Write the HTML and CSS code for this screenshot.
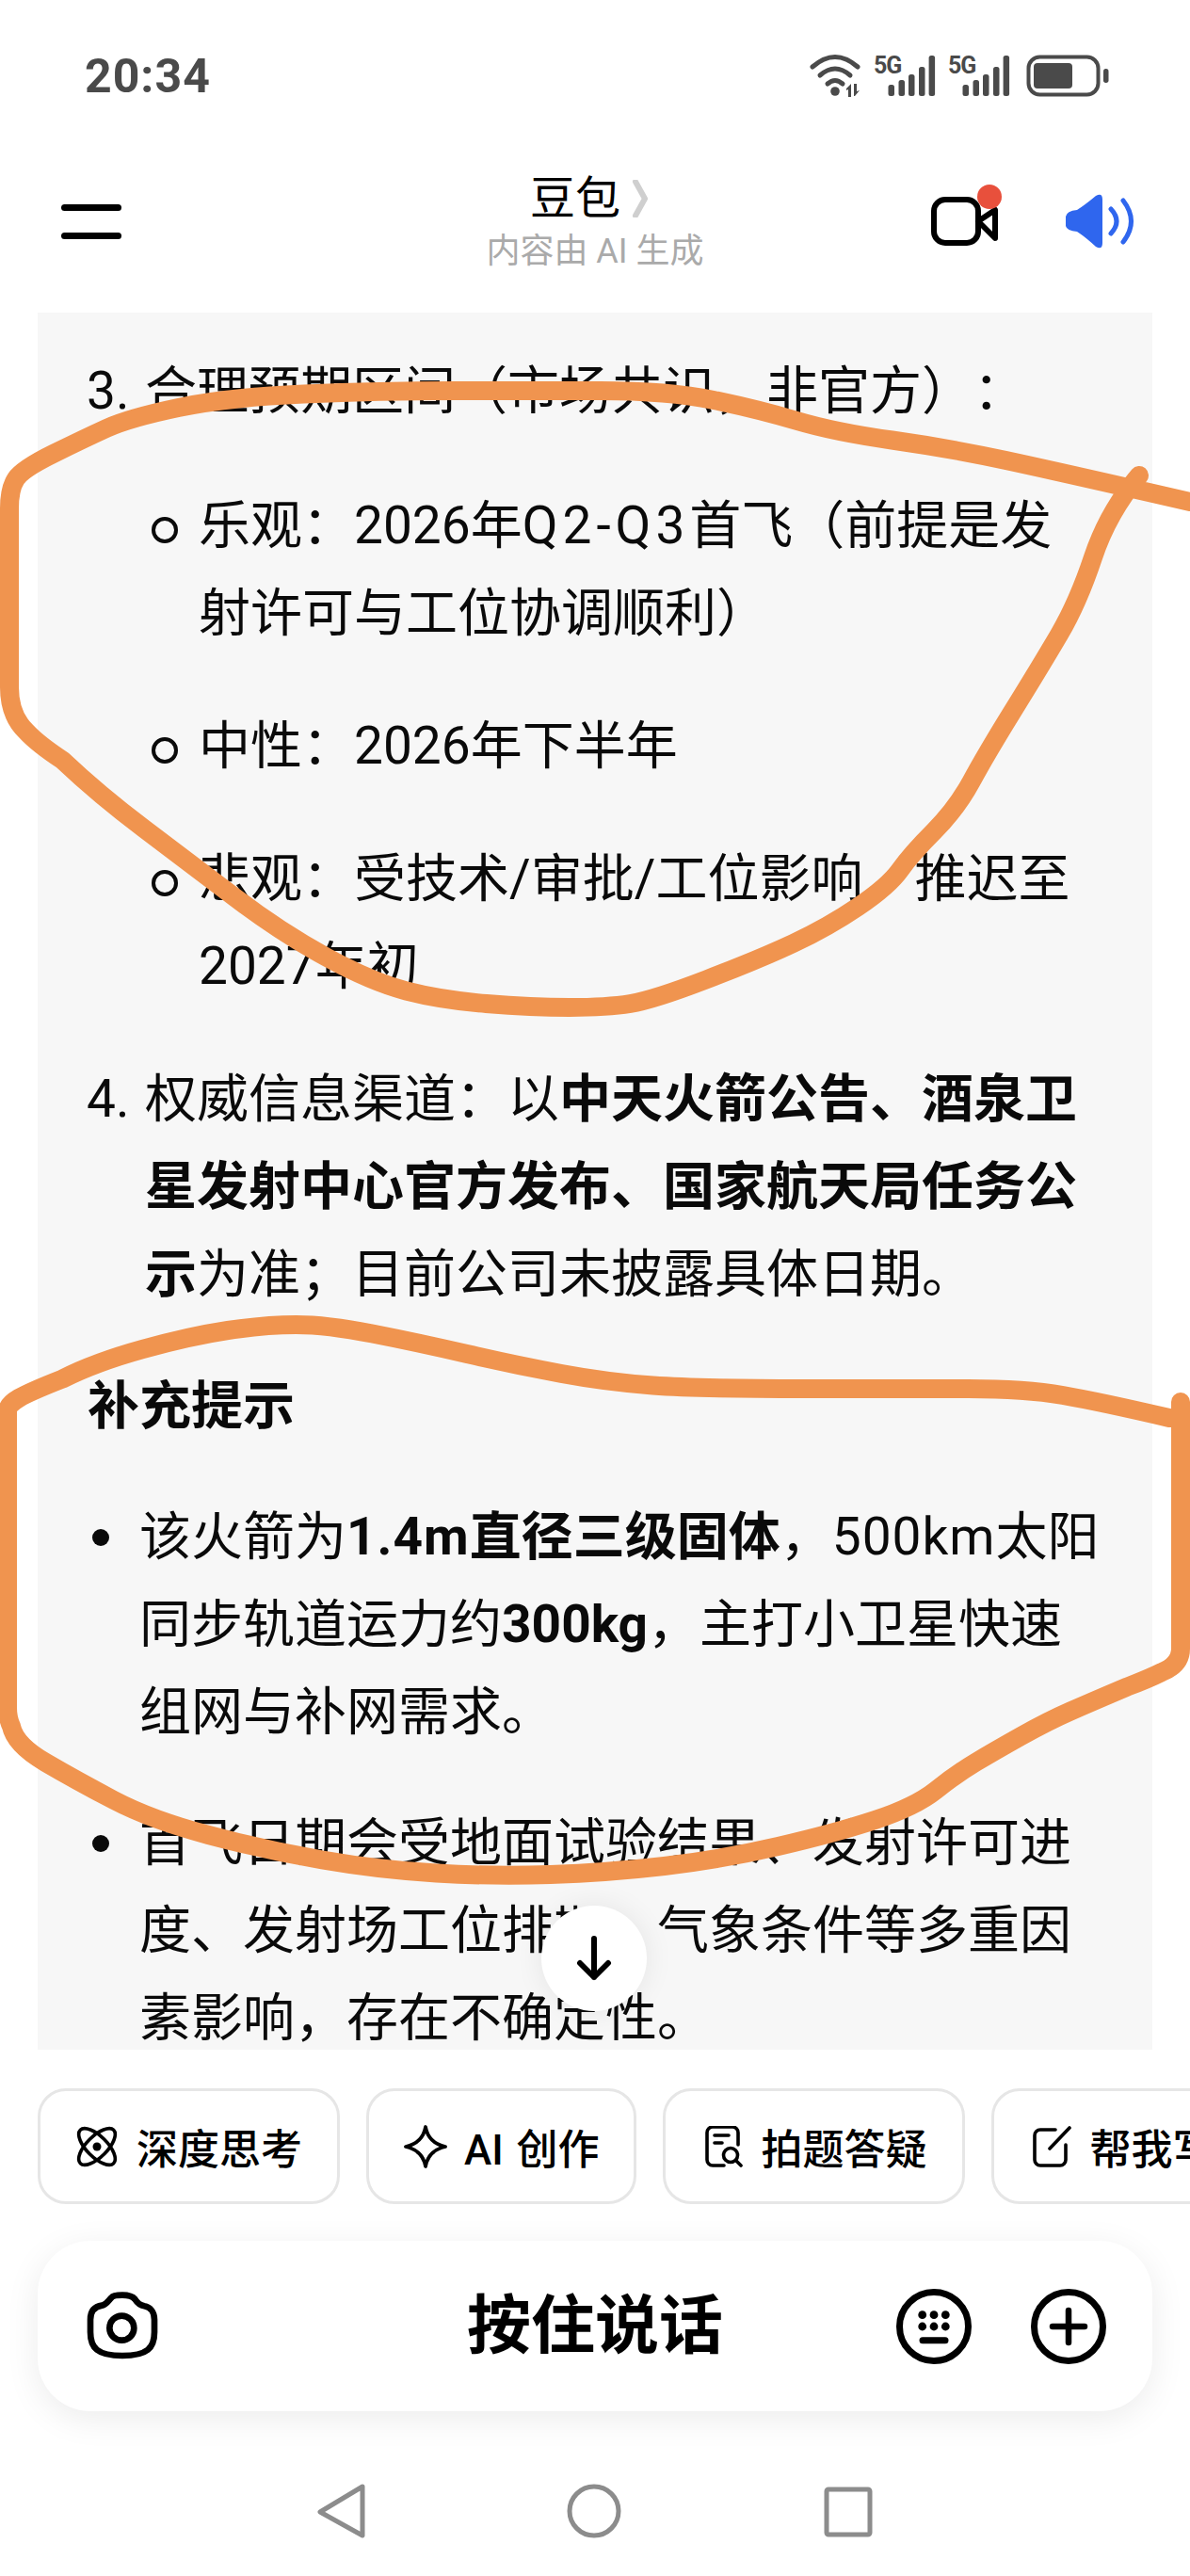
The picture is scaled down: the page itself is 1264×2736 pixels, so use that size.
FILE: index.html
```html
<!DOCTYPE html>
<html lang="zh-CN">
<head>
<meta charset="utf-8">
<title>豆包</title>
<link rel="stylesheet" href="styles.css">
</head>
<body>
<div class="screen">
  <header class="statusbar">
    <span class="time">20:34</span>
    <svg class="status-icons" viewBox="858 56 320 48" width="320" height="48">
      <g fill="none" stroke="#4a4a4a" stroke-linecap="round" stroke-width="5">
        <path d="M863 71Q887 50 911 71"/>
        <path d="M871 80Q887 66 903 80"/>
        <path d="M879 89Q887 82 895 89"/>
      </g>
      <g fill="#4a4a4a">
        <circle cx="887" cy="97" r="4.8"/>
        <path d="M899 94l5-5v14h-3v-8l-2 1zM907 89h3v8l3-1-5 6h-1z"/>
        <text class="net" x="928" y="78">5G</text>
        <rect x="943.5" y="90" width="6.5" height="12" rx="2.5"/>
        <rect x="954.5" y="85" width="6.5" height="17" rx="2.5"/>
        <rect x="965" y="79" width="6.5" height="23" rx="2.5"/>
        <rect x="976" y="71" width="6.5" height="31" rx="2.5"/>
        <rect x="986.6" y="59" width="6.5" height="43" rx="2.5"/>
        <text class="net" x="1007" y="78">5G</text>
        <rect x="1022.5" y="90" width="6.5" height="12" rx="2.5"/>
        <rect x="1033.5" y="85" width="6.5" height="17" rx="2.5"/>
        <rect x="1044" y="79" width="6.5" height="23" rx="2.5"/>
        <rect x="1055" y="71" width="6.5" height="31" rx="2.5"/>
        <rect x="1065.6" y="59" width="6.5" height="43" rx="2.5"/>
        <rect x="1098" y="67" width="41" height="27" rx="4"/>
        <rect x="1172" y="73" width="5.5" height="15" rx="2.7"/>
      </g>
      <rect x="1092.5" y="60.5" width="74" height="40" rx="12" fill="none" stroke="#4a4a4a" stroke-width="4"/>
    </svg>
  </header>

  <nav class="navbar">
    <div class="menu"><i></i><i></i></div>
    <div class="title">
      <div class="title-row">
        <span class="title-name">豆包</span>
        <svg class="chevron" viewBox="0 0 18 40" width="18" height="40"><path d="M4 2Q14 20 14 20Q14 20 4 38" fill="none" stroke="#cfcfcf" stroke-width="6" stroke-linecap="round" stroke-linejoin="round"/></svg>
      </div>
      <div class="title-sub">内容由 AI 生成</div>
    </div>
    <div class="actions">
      <svg viewBox="985 192 80 76" width="80" height="76">
        <rect x="992" y="212" width="47" height="46" rx="12" fill="none" stroke="#000" stroke-width="6"/>
        <path d="M1039 235L1057 223V253Z" fill="none" stroke="#000" stroke-width="6" stroke-linejoin="round"/>
        <circle cx="1051" cy="209" r="13" fill="#e8503c"/>
      </svg>
      <svg viewBox="1128 202 80 66" width="80" height="66">
        <path d="M1132 230Q1133 224 1144 223Q1152 218 1164 208Q1171 204 1171 212V258Q1171 266 1164 262Q1152 251 1144 246Q1133 245 1132 240Z" fill="#2f66ee"/>
        <path d="M1180 222Q1192 235 1180 248M1193 213Q1210 235 1193 257" fill="none" stroke="#2f66ee" stroke-width="5" stroke-linecap="round"/>
      </svg>
    </div>
  </nav>

  <main class="content">
    <ol class="steps" start="3">
      <li>合理预期区间（市场共识，非官方）：
        <ul class="sub">
          <li>乐观：2026年<span class="sp5">Q2-Q3</span>首飞（前提是发射许可与工位协调顺利）</li>
          <li>中性：2026年下半年</li>
          <li>悲观：受技术/审批/工位影响，推迟至2027年初</li>
        </ul>
      </li>
      <li>权威信息渠道：以<strong>中天火箭公告、酒泉卫星发射中心官方发布、国家航天局任务公示</strong>为准；目前公司未披露具体日期。</li>
    </ol>
    <p class="heading"><strong>补充提示</strong></p>
    <ul class="notes">
      <li>该火箭为<strong><span class="sp1">1.4m</span>直径三级固体</strong>，<span class="sp1">500km</span>太阳同步轨道运力约<strong>300kg</strong>，主打小卫星快速组网与补网需求。</li>
      <li>首飞日期会受地面试验结果、发射许可进度、发射场工位排期、气象条件等多重因素影响，存在不确定性。</li>
    </ul>
    <button class="scroll-down" type="button" aria-label="向下">
      <svg viewBox="0 0 40 48" width="40" height="48"><path d="M20 3V44M5 29L20 44L35 29" fill="none" stroke="#000" stroke-width="6" stroke-linecap="round" stroke-linejoin="round"/></svg>
    </button>
  </main>

  <div class="chips">
    <div class="chip">
      <svg viewBox="0 0 44 44" width="44" height="44" fill="none" stroke="#000" stroke-width="3.6"><ellipse cx="22" cy="22" rx="25" ry="11" transform="rotate(45 22 22)"/><ellipse cx="22" cy="22" rx="25" ry="11" transform="rotate(-45 22 22)"/><circle cx="22" cy="22" r="4.5" fill="#000" stroke="none"/></svg>
      <span>深度思考</span>
    </div>
    <div class="chip chip-ai">
      <svg viewBox="0 0 48 48" width="48" height="48" fill="none" stroke="#000" stroke-width="3.8" stroke-linejoin="round"><path d="M24 3Q27 20 45 24Q27 28 24 45Q21 28 3 24Q21 20 24 3Z"/></svg>
      <span>AI 创作</span>
    </div>
    <div class="chip chip-scan">
      <svg viewBox="0 0 40 44" width="40" height="44" fill="none" stroke="#000" stroke-width="3.6" stroke-linecap="round"><path d="M35 20V7a6 6 0 0 0-6-6H8a6 6 0 0 0-6 6V36a6 6 0 0 0 6 6H20"/><path d="M10 10H25M10 18H18"/><circle cx="27" cy="31" r="7.5"/><path d="M33 37L38 42"/></svg>
      <span>拍题答疑</span>
    </div>
    <div class="chip chip-write">
      <svg viewBox="0 0 44 44" width="44" height="44" fill="none" stroke="#000" stroke-width="3.6" stroke-linecap="round"><path d="M25 4H9a6 6 0 0 0-6 6V36a6 6 0 0 0 6 6H30a6 6 0 0 0 6-6V20"/><path d="M19 24L40 2"/></svg>
      <span>帮我写作</span>
    </div>
  </div>

  <section class="inputbar">
    <div class="input-left">
      <svg viewBox="60 35 240 230" width="80" height="76.67" fill="none" stroke="#000" stroke-width="20"><path d="M78 130C78 100 95 88 115 85C130 82 135 70 145 60C150 53 165 52 180 52C195 52 210 53 220 65C228 78 235 84 250 87C268 90 282 105 282 130V170C282 220 260 245 180 245C100 245 78 220 78 170Z"/><circle cx="178" cy="157" r="39"/></svg>
    </div>
    <div class="input-label">按住说话</div>
    <div class="input-right">
      <svg viewBox="0 0 80 80" width="80" height="80"><circle cx="40" cy="40" r="36.5" fill="none" stroke="#000" stroke-width="7"/><g fill="#000"><circle cx="27.7" cy="27.7" r="4.4"/><circle cx="40" cy="27.7" r="4.4"/><circle cx="52.3" cy="27.7" r="4.4"/><circle cx="27.7" cy="40" r="4.4"/><circle cx="40" cy="40" r="4.4"/><circle cx="52.3" cy="40" r="4.4"/></g><path d="M28 54.7H52" stroke="#000" stroke-width="7" stroke-linecap="round"/></svg>
      <svg viewBox="0 0 80 80" width="80" height="80"><circle cx="40" cy="40" r="36.5" fill="none" stroke="#000" stroke-width="7"/><path d="M23 40H57M40 23V57" stroke="#000" stroke-width="6.5" stroke-linecap="round"/></svg>
    </div>
  </section>

  <footer class="sysnav">
    <svg viewBox="0 0 52 58" width="52" height="58"><path d="M49 3L4 30L49 55Z" fill="none" stroke="#8c8c8c" stroke-width="5" stroke-linejoin="round"/></svg>
    <svg viewBox="0 0 60 58" width="60" height="58"><circle cx="30" cy="29" r="26" fill="none" stroke="#8c8c8c" stroke-width="5"/></svg>
    <svg viewBox="0 0 54 58" width="54" height="58"><rect x="4" y="6" width="46" height="48" rx="2" fill="none" stroke="#8c8c8c" stroke-width="5"/></svg>
  </footer>

  <svg class="scribble" viewBox="0 0 1264 2736" width="1264" height="2736">
    <path d="M1264 533Q1129 502 1068.5 489Q1008 476 947.5 467.5Q887 459 846.5 447Q806 435 758 425Q710 415 637.5 415Q565 415 484 415Q403 415 322.5 418.5Q242 422 189.5 433Q137 444 113 455Q89 466 56.5 482Q24 498 17 508.5Q10 519 10 540L10 730Q10 760 28 777Q40 790 66.5 807.5Q105 844 153.5 880.5Q202 917 250 953.5Q298 990 346.5 1016.5Q395 1043 431.5 1052.5Q468 1062 516.5 1066Q565 1070 605 1070Q645 1070 669.5 1066Q694 1062 750 1040.5Q806 1019 842.5 1002Q879 985 911.5 963Q944 941 956 924Q968 907 992 883Q1016 859 1032 829.5Q1048 800 1076.5 754Q1105 708 1125 674Q1145 640 1161 592Q1177 544 1210 505"/>
    <path d="M1254 1489L1254 1751Q1254 1768 1234 1776Q1220 1783 1197.5 1791.5Q1161 1807 1137 1817.5Q1113 1828 1084.5 1844Q1056 1860 1036 1872Q1016 1884 994 1901.5Q972 1919 929.5 1933Q887 1947 826.5 1961Q766 1975 705.5 1982Q645 1989 584.5 1991Q524 1993 463.5 1989.5Q403 1986 342.5 1975.5Q282 1965 221.5 1949Q161 1933 121 1912Q81 1891 48.5 1872Q16 1853 12 1833.5Q8 1825 8 1814L8 1499Q8 1492 20 1485Q32 1478 66.5 1464.5Q101 1447 151.5 1433Q202 1419 242 1413Q282 1407 314.5 1407Q347 1407 395.5 1416.5Q444 1426 496 1438Q548 1450 596.5 1459Q645 1468 693.5 1471.5Q742 1475 855 1475Q968 1475 1028.5 1475Q1089 1475 1129 1482Q1169 1489 1242 1506"/>
  </svg>
</div>
</body>
</html>
```

FILE: styles.css
```css
* { box-sizing: border-box; }
html, body { margin: 0; padding: 0; background: #fff; }
body { font-family: Roboto, "Noto Sans CJK SC", sans-serif; color: #0a0a0a; text-spacing-trim: space-all; }

.screen { position: relative; width: 1264px; height: 2736px; overflow: hidden; display: flex; flex-direction: column; background: #fff; }

.statusbar { height: 150px; flex: none; display: flex; justify-content: space-between; align-items: flex-start; padding: 56px 86px 0 90px; }
.time { font-size: 50px; line-height: 50px; font-weight: 700; color: #4a4a4a; letter-spacing: 1px; }
.net { font-family: Roboto, sans-serif; font-size: 25px; font-weight: 700; letter-spacing: -1px; }

.navbar { height: 182px; flex: none; display: grid; grid-template-columns: 1fr auto 1fr; align-items: start; padding: 0 56px; }
.menu { display: flex; flex-direction: column; gap: 23px; width: 64px; margin: 67px 0 0 9px; }
.menu i { display: block; width: 64px; height: 7px; border-radius: 4px; background: #000; }
.title { display: flex; flex-direction: column; align-items: center; padding-top: 33px; }
.title-row { display: flex; align-items: center; height: 56px; padding-right: 12px; }
.title-name { font-size: 48px; line-height: 56px; color: #000; }
.chevron { margin-left: 12px; }
.title-sub { margin-top: 5px; font-size: 36px; line-height: 46px; color: #aaa; }
.actions { display: flex; justify-content: flex-end; align-items: flex-start; gap: 63px; margin-top: 42px; }
.actions svg:last-child { margin-top: 10px; }

.content { position: relative; flex: none; height: 1845px; margin: 0 40px; padding: 37px 54px 0 53px; background: #f7f7f7; overflow: hidden; font-size: 55px; line-height: 93px; }
.sp5 { letter-spacing: 5px; }
.sp1 { letter-spacing: 1px; }
.steps { margin: 0; padding: 0 0 0 61px; list-style: none; }
.steps > li { position: relative; }
.steps > li::before { content: counter(list-item) "."; position: absolute; left: -62px; top: 0; }
.steps > li + li { margin-top: 48px; }
.sub { margin: 50px 0 0; padding: 0 0 0 57px; list-style: none; }
.sub li { position: relative; }
.sub li::before { content: ""; position: absolute; left: -50px; top: 37px; width: 20px; height: 20px; border: 4px solid #0a0a0a; border-radius: 50%; }
.sub li + li { margin-top: 48px; }
.heading { margin: 47px 0 46px; }
.notes { margin: 0; padding: 0 0 0 55px; list-style: none; }
.notes li { position: relative; }
.notes li::before { content: ""; position: absolute; left: -50px; top: 38px; width: 18px; height: 18px; border-radius: 50%; background: #0a0a0a; }
.notes li + li { margin-top: 46px; }
.scroll-down { position: absolute; left: 535px; top: 1692px; width: 112px; height: 112px; padding: 0; border: 0; border-radius: 50%; background: #fff; box-shadow: 0 0 30px rgba(0, 0, 0, 0.08); display: flex; align-items: center; justify-content: center; }

.chips { flex: none; display: flex; gap: 28px; margin: 41px 0 0 40px; height: 123px; }
.chip { flex: none; display: flex; align-items: center; gap: 20px; padding: 0 37px 0 38px; border: 3px solid #e6e6e6; border-radius: 30px; font-size: 44px; font-weight: 500; color: #000; white-space: nowrap; }
.chip-ai { gap: 17px; padding: 0 36px; word-spacing: 3px; }
.chip-scan { padding-left: 42px; }
.chip-write { gap: 18px; padding-left: 40px; }

.inputbar { flex: none; display: grid; grid-template-columns: 1fr auto 1fr; align-items: center; height: 181px; margin: 39px 40px 0; padding: 0 49px; border-radius: 56px; background: #fff; box-shadow: 0 8px 36px rgba(0, 0, 0, 0.08); }
.input-left { display: flex; margin-left: 1px; }
.input-label { font-size: 68px; font-weight: 700; color: #000; line-height: 80px; }
.input-right { display: flex; justify-content: flex-end; gap: 63px; }

.sysnav { flex: none; display: flex; justify-content: center; gap: 213px; padding-top: 77px; }

.scribble { position: absolute; left: 0; top: 0; pointer-events: none; }
.scribble path { fill: none; stroke: #f0944f; stroke-width: 20; stroke-linejoin: round; stroke-linecap: round; }
```
